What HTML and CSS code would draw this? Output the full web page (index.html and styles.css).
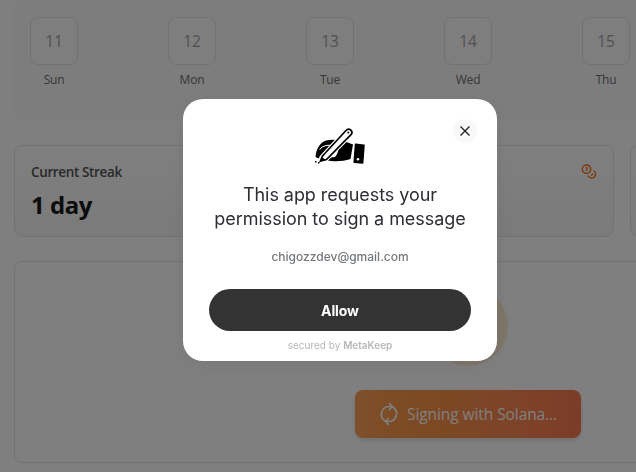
FILE: index.html
```html
<!DOCTYPE html>
<html lang="en">
<head>
<meta charset="utf-8">
<title>Daily streak</title>
<link rel="stylesheet" href="styles.css">
</head>
<body>
<div class="viewport">
<main class="page">
  <section class="calendar">
    <div class="day"><span class="date">11</span><span class="weekday">Sun</span></div>
    <div class="day"><span class="date">12</span><span class="weekday">Mon</span></div>
    <div class="day"><span class="date">13</span><span class="weekday">Tue</span></div>
    <div class="day"><span class="date">14</span><span class="weekday">Wed</span></div>
    <div class="day"><span class="date">15</span><span class="weekday">Thu</span></div>
  </section>
  <section class="stats">
    <article class="stat">
      <div>
        <h2 class="stat-label">Current Streak</h2>
        <p class="stat-value">1 day</p>
      </div>
      <svg class="coins" viewBox="0 0 16 16" fill="none" stroke="currentColor" stroke-width="1.4">
        <circle cx="5.500" cy="5.200" r="4.200"/>
        <path d="M4.900 3.700h.9v3.400M12.400 6.500a4 4 0 1 1-5.500 5.100M10.100 11.500l2-2"/>
      </svg>
    </article>
    <article class="stat"></article>
  </section>
  <section class="claim">
    <div class="token"></div>
    <button class="sign">
      <svg class="spinner" viewBox="0 0 24 24" fill="none" stroke="currentColor" stroke-width="1.700" stroke-linecap="round" stroke-linejoin="round">
        <path d="M7.500 18.500A7.800 7.800 0 0 1 12 4.500h3.500M12.500 1.500l3 3-3 3M16.500 5.500A7.800 7.800 0 0 1 12 19.500H8.500M11.500 16.500l-3 3 3 3"/>
      </svg>
      <span>Signing with Solana...</span>
    </button>
  </section>
</main>
</div>
<div class="overlay">
  <div class="dialog" role="dialog">
    <button class="close" aria-label="Close">
      <svg viewBox="0 0 10 10" fill="none" stroke="currentColor" stroke-width="1.400"><path d="M.5.5l9 9M9.500.5l-9 9"/></svg>
    </button>
    <svg class="hand" viewBox="0 0 52 38">
      <path d="M1.500 29C2 21 6 14.500 12 12.500c7-1.700 17-.5 27 4L36.500 31c-6 2-13 2.500-19 2L8 32z"/>
      <path d="M41.500 16.300l8.500 1-1.300 17.700-8.500-.7z" stroke="#000" stroke-width="1.500" stroke-linejoin="round"/>
      <path d="M5.500 21.500q2.500-3 6.500-4l4-.3" stroke="#fff" stroke-width="1" fill="none"/>
      <path d="M17 29.500l7.500-8.500q-1 5.500-3.500 8z" fill="#fff"/>
      <path d="M7.500 29L32 2.500Q34.200.2 36.700 2q2.500 2.200.3 4.700L12 32l-6 1z" fill="#fff" stroke="#fff" stroke-width="4"/>
      <path d="M8.500 28L32 2.500Q34.200.2 36.700 2q2.500 2.200.3 4.700L12.500 31.500l-6 1.500z" fill="#fff" stroke="#000" stroke-width="1.700"/>
      <path d="M8 29l3.500 3-5.500 1.500z"/>
      <circle cx="34.300" cy="4.500" r="1"/>
      <circle cx="44" cy="31.300" r="1.300" fill="#fff"/>
      <path d="M1 33h1.500v1.500H1zM4 34h1.500v1.500H4z"/>
    </svg>
    <h1 class="title">This app requests your<br>permission to sign a message</h1>
    <p class="email">chigozzdev@gmail.com</p>
    <button class="allow">Allow</button>
    <p class="secured">secured by <b>MetaKeep</b></p>
  </div>
</div>
</body>
</html>
```

FILE: styles.css
```css
* { box-sizing: border-box; }
body {
  margin: 0;
  background: #fff;
  font-family: "Segoe UI", "Open Sans", "Noto Sans", sans-serif;
}
h1, h2, p { margin: 0; }
button { border: 0; padding: 0; font: inherit; }
.viewport { height: 472px; overflow: hidden; }
.page {
  display: flex;
  flex-direction: column;
  gap: 24px;
  width: 908px;
  margin-left: 14px;
}
.calendar {
  display: flex;
  gap: 90px;
  height: 121px;
  padding: 17px 16px 0;
  border-radius: 8px;
  background: #fafafa;
}
.day {
  display: flex;
  flex-direction: column;
  align-items: center;
  gap: 7px;
  width: 48px;
  flex: none;
}
.date {
  display: flex;
  align-items: center;
  justify-content: center;
  width: 48px;
  height: 48px;
  border: 1px solid #e5e5e5;
  border-radius: 8px;
  background: #fdfdfd;
  color: #a3a3a3;
  font-size: 15.500px;
  letter-spacing: -.2px;
}
.weekday {
  color: #6f6f6f;
  font-size: 12px;
  line-height: 16px;
  letter-spacing: -.2px;
}
.stats { display: flex; gap: 16px; }
.stat {
  display: flex;
  justify-content: space-between;
  flex: none;
  width: 600px;
  height: 92px;
  padding: 16px;
  border: 1px solid #e5e5e5;
  border-radius: 8px;
  background: linear-gradient(#fff, #f5f5f5);
}
.stat-label {
  color: #525252;
  font-size: 13.500px;
  font-weight: 600;
  line-height: 20px;
  letter-spacing: -.37px;
}
.stat-value {
  margin-top: 7px;
  color: #171717;
  font-size: 24px;
  font-weight: 700;
  line-height: 32px;
  letter-spacing: -.5px;
}
.coins { width: 16px; height: 16px; margin-top: 2px; color: #f97316; }
.claim {
  display: flex;
  flex-direction: column;
  align-items: center;
  gap: 24px;
  height: 202px;
  padding-top: 24px;
  border: 1px solid #e5e5e5;
  border-radius: 8px;
}
.token { width: 80px; height: 80px; border-radius: 50%; background: #ffedd5; }
.sign {
  display: flex;
  align-items: center;
  gap: 6px;
  width: 226px;
  height: 48px;
  padding-left: 22px;
  border-radius: 8px;
  background: linear-gradient(90deg, #fb9f57, #f99444 30%, #fb8752 70%, #f97950);
  color: #fff;
  font-size: 15.500px;
  letter-spacing: -.08px;
  white-space: nowrap;
  box-shadow: 0 2px 4px #0002;
}
.spinner { width: 24px; height: 24px; }
.overlay {
  position: fixed;
  inset: 0;
  display: flex;
  align-items: flex-start;
  justify-content: center;
  padding: 99px 0 0 44px;
  background: rgba(0, 0, 0, .5);
}
.dialog {
  position: relative;
  display: flex;
  flex-direction: column;
  align-items: center;
  width: 314px;
  height: 262px;
  padding-top: 29px;
  border-radius: 20px;
  background: #fff;
  box-shadow: 0 4px 20px #0001;
  font-family: Inter, sans-serif;
}
.close {
  position: absolute;
  top: 20px;
  right: 20px;
  display: flex;
  align-items: center;
  justify-content: center;
  width: 24px;
  height: 24px;
  border-radius: 50%;
  background: #f9f9f9;
  color: #222;
}
.close svg { width: 10px; height: 10px; }
.hand { width: 52px; height: 38px; flex: none; }
.title {
  margin-top: 17px;
  color: #2c2e33;
  font-size: 18px;
  font-weight: 400;
  line-height: 24px;
  letter-spacing: -.05px;
  text-align: center;
  white-space: nowrap;
}
.email {
  margin-top: 18px;
  color: #73777b;
  font-size: 12px;
  font-weight: 500;
  line-height: 16px;
}
.allow {
  width: 262px;
  height: 42px;
  margin-top: 24px;
  border-radius: 21px;
  background: #333;
  color: #fff;
  font-size: 14px;
  font-weight: 700;
  letter-spacing: -.1px;
}
.secured {
  margin-top: 7px;
  color: #b7b7b7;
  font-size: 10px;
  line-height: 14px;
}
.secured b { font-weight: 600; }
```
